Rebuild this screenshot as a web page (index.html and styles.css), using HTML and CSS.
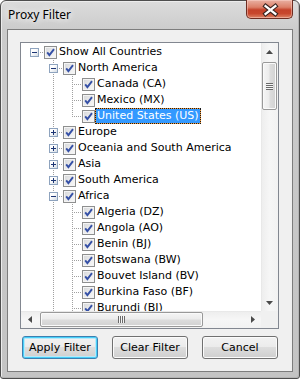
FILE: index.html
```html
<!DOCTYPE html>
<html>
<head>
<meta charset="utf-8">
<title>Proxy Filter</title>
<link rel="stylesheet" href="styles.css">
</head>
<body>
<div class="window">
  <div class="titlebar">
    <span class="title">Proxy Filter</span>
    <div class="close">
      <svg width="47" height="19" viewBox="0 0 47 19">
        <path d="M20 6 L30 14 M30 6 L20 14" stroke="#3a2420" stroke-width="4.6" stroke-linecap="square" fill="none"/>
        <path d="M20 6 L30 14 M30 6 L20 14" stroke="#ffffff" stroke-width="2.4" stroke-linecap="square" fill="none"/>
      </svg>
    </div>
  </div>
  <div class="client">
    <div class="tree">
      <div class="viewport">
        <div class="row"><div class="c h"><span class="exp minus"></span></div><span class="cb"></span><span class="lbl">Show All Countries</span></div>
        <div class="row"><div class="c"></div><div class="c v h"><span class="exp minus"></span></div><span class="cb"></span><span class="lbl">North America</span></div>
        <div class="row"><div class="c"></div><div class="c v"></div><div class="c v h"></div><span class="cb"></span><span class="lbl">Canada (CA)</span></div>
        <div class="row"><div class="c"></div><div class="c v"></div><div class="c v h"></div><span class="cb"></span><span class="lbl">Mexico (MX)</span></div>
        <div class="row"><div class="c"></div><div class="c v"></div><div class="c vt h"></div><span class="cb"></span><span class="lbl sel">United States (US)</span></div>
        <div class="row"><div class="c"></div><div class="c v h"><span class="exp plus"></span></div><span class="cb"></span><span class="lbl">Europe</span></div>
        <div class="row"><div class="c"></div><div class="c v h"><span class="exp plus"></span></div><span class="cb"></span><span class="lbl">Oceania and South America</span></div>
        <div class="row"><div class="c"></div><div class="c v h"><span class="exp plus"></span></div><span class="cb"></span><span class="lbl">Asia</span></div>
        <div class="row"><div class="c"></div><div class="c v h"><span class="exp plus"></span></div><span class="cb"></span><span class="lbl">South America</span></div>
        <div class="row"><div class="c"></div><div class="c v h"><span class="exp minus"></span></div><span class="cb"></span><span class="lbl">Africa</span></div>
        <div class="row"><div class="c"></div><div class="c v"></div><div class="c v h"></div><span class="cb"></span><span class="lbl">Algeria (DZ)</span></div>
        <div class="row"><div class="c"></div><div class="c v"></div><div class="c v h"></div><span class="cb"></span><span class="lbl">Angola (AO)</span></div>
        <div class="row"><div class="c"></div><div class="c v"></div><div class="c v h"></div><span class="cb"></span><span class="lbl">Benin (BJ)</span></div>
        <div class="row"><div class="c"></div><div class="c v"></div><div class="c v h"></div><span class="cb"></span><span class="lbl">Botswana (BW)</span></div>
        <div class="row"><div class="c"></div><div class="c v"></div><div class="c v h"></div><span class="cb"></span><span class="lbl">Bouvet Island (BV)</span></div>
        <div class="row"><div class="c"></div><div class="c v"></div><div class="c v h"></div><span class="cb"></span><span class="lbl">Burkina Faso (BF)</span></div>
        <div class="row"><div class="c"></div><div class="c v"></div><div class="c v h"></div><span class="cb"></span><span class="lbl">Burundi (BI)</span></div>
      </div>
      <div class="vbar">
        <div class="arrow"><svg width="7" height="4" viewBox="0 0 7 4"><path d="M3.5 0 L7 4 L0 4 Z" fill="#4a4a4a"/></svg></div>
        <div class="vthumb"><span class="grip-h"></span></div>
        <div class="spacer"></div>
        <div class="arrow"><svg width="7" height="4" viewBox="0 0 7 4"><path d="M0 0 L7 0 L3.5 4 Z" fill="#4a4a4a"/></svg></div>
      </div>
      <div class="hbar">
        <div class="arrow"><svg width="4" height="7" viewBox="0 0 4 7"><path d="M4 0 L4 7 L0 3.5 Z" fill="#4a4a4a"/></svg></div>
        <div class="hthumb"><span class="grip-v"></span></div>
        <div class="spacer"></div>
        <div class="arrow"><svg width="4" height="7" viewBox="0 0 4 7"><path d="M0 0 L4 3.5 L0 7 Z" fill="#4a4a4a"/></svg></div>
      </div>
      <div class="corner"></div>
    </div>
    <div class="buttons">
      <button class="btn default">Apply Filter</button>
      <button class="btn">Clear Filter</button>
      <button class="btn">Cancel</button>
    </div>
  </div>
</div>
</body>
</html>
```

FILE: styles.css
```css
* { box-sizing: border-box; }
html, body { margin: 0; padding: 0; }
body {
  width: 300px;
  height: 379px;
  overflow: hidden;
  background: #ffffff;
  font-family: "DejaVu Sans", sans-serif;
  font-size: 11px;
}

.window {
  width: 300px;
  height: 379px;
  border: 1px solid #4e4e4e;
  border-radius: 6px 6px 3px 3px;
  background: linear-gradient(to bottom, #dcdcdc 0, #cbcbcb 30px, #c4c4c4 100%);
  box-shadow: inset 1px 1px 0 #ececec, inset -1px -1px 0 #b4b4b4;
  display: flex;
  flex-direction: column;
}

.titlebar {
  height: 28px;
  flex: none;
  display: flex;
  justify-content: space-between;
  align-items: flex-start;
  padding: 0 6px 0 7px;
}

.title {
  margin-top: 6px;
  font-family: "Noto Sans", sans-serif;
  font-size: 12px;
  line-height: 16px;
  color: #000;
  text-shadow: 0 0 6px #f4f4f4, 0 0 10px #f4f4f4;
}

.close {
  margin-top: -1px;
  width: 47px;
  height: 19px;
  border: 1px solid #6e2d22;
  border-top: none;
  border-radius: 0 0 5px 5px;
  background: linear-gradient(to bottom, #e9b0a2 0%, #dc8069 40%, #c4422a 55%, #c8472d 75%, #dc8466 100%);
  box-shadow: inset 0 0 0 1px rgba(255, 220, 210, 0.45);
  display: flex;
  overflow: hidden;
}
.close svg { display: block; margin-left: -1px; }

.client {
  flex: 1;
  margin: 0 6px 6px 6px;
  border: 1px solid #7d7d7d;
  background: #f0f0f0;
  padding: 12px 13px 12px 12px;
  display: flex;
  flex-direction: column;
}

.tree {
  height: 287px;
  flex: none;
  border: 1px solid #828790;
  background: #ffffff;
  display: grid;
  grid-template-columns: 240px 17px;
  grid-template-rows: 268px 17px;
}

.viewport {
  overflow: hidden;
  padding: 1px 0 0 4px;
}

.row {
  display: flex;
  height: 16px;
  align-items: flex-start;
}

.c {
  width: 19px;
  height: 16px;
  flex: none;
  position: relative;
  padding: 4px 0 0 5px;
}
.c.v::before, .c.vt::before {
  content: "";
  position: absolute;
  left: 9px;
  top: 0;
  width: 1px;
  height: 16px;
  background: repeating-linear-gradient(to bottom, #a0a0a0 0 1px, transparent 1px 2px);
}
.c.vt::before { height: 9px; }
.c.h::after {
  content: "";
  position: absolute;
  left: 9px;
  right: 0;
  top: 8px;
  height: 1px;
  background: repeating-linear-gradient(to right, #a0a0a0 0 1px, transparent 1px 2px);
}

.exp {
  display: block;
  position: relative;
  z-index: 1;
  width: 9px;
  height: 9px;
  border: 1px solid #8ea3be;
  background: linear-gradient(135deg, #ffffff 35%, #d3dbe4 100%);
}
.exp::before {
  content: "";
  position: absolute;
  left: 1px;
  top: 3px;
  width: 5px;
  height: 1px;
  background: #1d3574;
}
.exp.plus::after {
  content: "";
  position: absolute;
  left: 3px;
  top: 1px;
  width: 1px;
  height: 5px;
  background: #1d3574;
}

.cb {
  flex: none;
  width: 13px;
  height: 13px;
  margin-top: 2px;
  border: 1px solid #8e8f8f;
  background:
    url("data:image/svg+xml,%3Csvg xmlns='http://www.w3.org/2000/svg' width='11' height='11'%3E%3Cpath d='M2.2 5.4 L4.4 8.2 L9 2.2' stroke='%233550a6' stroke-width='1.9' fill='none'/%3E%3C/svg%3E") center / 11px 11px no-repeat,
    linear-gradient(135deg, #d4d6d9 0%, #eeeeee 60%, #f8f8f8 100%);
  box-shadow: inset 0 0 0 1px #f4f4f4;
}

.lbl {
  flex: none;
  height: 16px;
  line-height: 14px;
  border: 1px solid transparent;
  padding: 0 1px;
  white-space: nowrap;
  color: #000;
}
.lbl.sel {
  position: relative;
  background: #3399ff;
  color: #ffffff;
  border-color: #f59a3a;
}
.lbl.sel::after {
  content: "";
  position: absolute;
  inset: -1px;
  border: 1px dotted #1a1a1a;
}

.vbar {
  display: flex;
  flex-direction: column;
  background: linear-gradient(to right, #e3e3e3 0, #eeeeee 1px, #f6f6f6 50%, #f2f2f2 100%);
}
.hbar {
  display: flex;
  background: linear-gradient(to bottom, #e3e3e3 0, #eeeeee 1px, #f6f6f6 50%, #f2f2f2 100%);
}
.arrow {
  flex: none;
  width: 17px;
  height: 17px;
  display: flex;
  align-items: center;
  justify-content: center;
}
.arrow svg { display: block; }
.spacer { flex: 1; }

.vthumb {
  flex: none;
  height: 48px;
  margin: 2px 1px 0 1px;
  border: 1px solid #999999;
  border-radius: 2px;
  background: linear-gradient(to right, #f5f5f5 0%, #ececec 45%, #dcdcdc 55%, #d2d2d2 100%);
  box-shadow: inset 0 0 0 1px #fafafa;
  display: flex;
  align-items: center;
  justify-content: center;
}
.hthumb {
  flex: none;
  width: 163px;
  margin: 1px 0 1px 2px;
  border: 1px solid #999999;
  border-radius: 2px;
  background: linear-gradient(to bottom, #f5f5f5 0%, #ececec 45%, #dcdcdc 55%, #d2d2d2 100%);
  box-shadow: inset 0 0 0 1px #fafafa;
  display: flex;
  align-items: center;
  justify-content: center;
}
.grip-h {
  width: 7px;
  height: 7px;
  background: repeating-linear-gradient(to bottom, #6a6a6a 0 1px, #f6f6f6 1px 2px);
}
.grip-v {
  width: 7px;
  height: 7px;
  background: repeating-linear-gradient(to right, #6a6a6a 0 1px, #f6f6f6 1px 2px);
}
.corner { background: #f0f0f0; }

.buttons {
  margin-top: 7px;
  display: flex;
  justify-content: space-between;
  padding: 0 1px 0 2px;
}
.btn {
  width: 76px;
  height: 23px;
  padding: 0;
  border: 1px solid #707070;
  border-radius: 3px;
  background: linear-gradient(to bottom, #f2f2f2 0%, #ebebeb 50%, #dddddd 50%, #cfcfcf 100%);
  box-shadow: inset 0 0 0 1px #fbfbfb;
  font-family: "DejaVu Sans", sans-serif;
  font-size: 11px;
  color: #000;
}
.btn.default {
  border-color: #3c7fb1;
  box-shadow: inset 0 0 0 1px #48d0f8, inset 0 0 0 2px #b8e8fa;
}
```
